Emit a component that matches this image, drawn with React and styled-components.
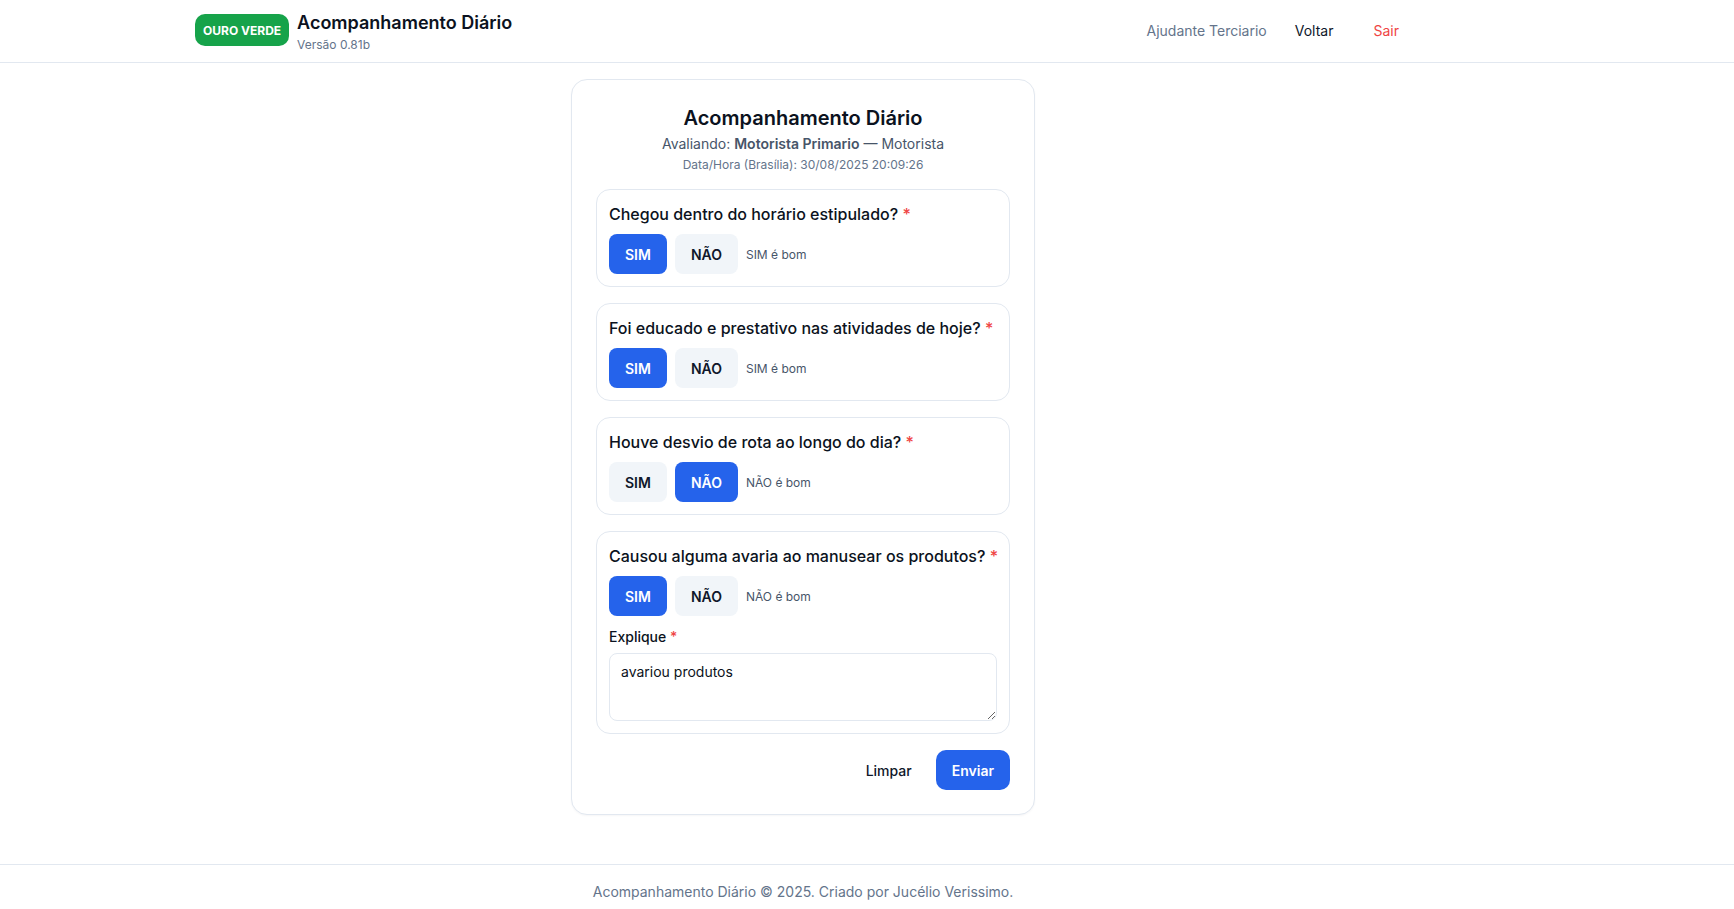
import styled, { createGlobalStyle } from "styled-components";

const questions = [
  { id: 1, text: "Chegou dentro do horário estipulado?", value: "SIM", hint: "SIM é bom" },
  { id: 2, text: "Foi educado e prestativo nas atividades de hoje?", value: "SIM", hint: "SIM é bom" },
  { id: 3, text: "Houve desvio de rota ao longo do dia?", value: "NÃO", hint: "NÃO é bom" },
  { id: 4, text: "Causou alguma avaria ao manusear os produtos?", value: "SIM", hint: "NÃO é bom", explain: "avariou produtos" },
];

export default function App() {
  return (
    <>
      <GlobalStyle />
      <Page>
        <Header>
          <Container>
            <HeaderRow>
              <Brand>
                <Badge>OURO VERDE</Badge>
                <BrandText>
                  <AppTitle>Acompanhamento Diário</AppTitle>
                  <Version>Versão 0.81b</Version>
                </BrandText>
              </Brand>
              <Nav>
                <UserName>Ajudante Terciario</UserName>
                <NavButton>Voltar</NavButton>
                <NavButton $danger>Sair</NavButton>
              </Nav>
            </HeaderRow>
          </Container>
        </Header>

        <Main>
          <Container>
            <Card>
              <CardHead>
                <CardTitle>Acompanhamento Diário</CardTitle>
                <Subtitle>
                  Avaliando: <strong>Motorista Primario</strong> — Motorista
                </Subtitle>
                <Stamp>Data/Hora (Brasília): 30/08/2025 20:09:26</Stamp>
              </CardHead>

              <Questions>
                {questions.map((q) => (
                  <QuestionBox key={q.id}>
                    <QuestionText>
                      {q.text} <Req>*</Req>
                    </QuestionText>
                    <Choices>
                      <Choice $active={q.value === "SIM"}>SIM</Choice>
                      <Choice $active={q.value === "NÃO"}>NÃO</Choice>
                      <Hint>{q.hint}</Hint>
                    </Choices>
                    {q.explain && (
                      <>
                        <FieldLabel>
                          Explique <Req>*</Req>
                        </FieldLabel>
                        <TextArea defaultValue={q.explain} />
                      </>
                    )}
                  </QuestionBox>
                ))}
              </Questions>

              <Actions>
                <GhostButton>Limpar</GhostButton>
                <PrimaryButton>Enviar</PrimaryButton>
              </Actions>
            </Card>
          </Container>
        </Main>

        <Footer>
          <Container>
            <FooterText>Acompanhamento Diário © 2025. Criado por Jucélio Verissimo.</FooterText>
          </Container>
        </Footer>
      </Page>
    </>
  );
}

const GlobalStyle = createGlobalStyle`
  * { box-sizing: border-box; }
  body {
    margin: 0;
    background: #ffffff;
    font-family: Inter, "Noto Sans", "Liberation Sans", sans-serif;
    color: #0f172a;
  }
  button, textarea { font-family: inherit; }
`;

const Page = styled.div`
  min-height: 100vh;
  background: #ffffff;
`;

const Container = styled.div`
  width: 1216px;
  margin-left: 195px;
`;

const Header = styled.header`
  height: 63px;
  border-bottom: 1px solid #e2e8f0;
`;

const HeaderRow = styled.div`
  height: 62px;
  display: flex;
  align-items: center;
  justify-content: space-between;
`;

const Brand = styled.div`
  display: flex;
  align-items: center;
  gap: 8px;
`;

const Badge = styled.span`
  display: inline-flex;
  align-items: center;
  height: 32px;
  padding: 0 8px;
  margin-top: -2px;
  border-radius: 10px;
  background: #16a34a;
  color: #ffffff;
  font-size: 12px;
  font-weight: 700;
`;

const BrandText = styled.div`
  display: flex;
  flex-direction: column;
  gap: 2px;
  margin-top: 2px;
`;

const AppTitle = styled.div`
  font-size: 18px;
  font-weight: 600;
  line-height: 24px;
  color: #0b1220;
`;

const Version = styled.div`
  font-size: 12px;
  line-height: 16px;
  color: #64748b;
`;

const Nav = styled.nav`
  display: flex;
  align-items: center;
  gap: 16px;
  margin-top: -2px;
`;

const UserName = styled.span`
  font-size: 14px;
  color: #64748b;
`;

const NavButton = styled.button`
  border: 0;
  background: transparent;
  padding: 6px 12px;
  font-size: 14px;
  color: ${(p) => (p.$danger ? "#ef4444" : "#0f172a")};
  cursor: pointer;
`;

const Main = styled.main`
  padding: 16px 0 49px;
`;

const Card = styled.section`
  width: 464px;
  margin: 0 auto;
  padding: 24px;
  border: 1px solid #e2e8f0;
  border-radius: 16px;
  background: #ffffff;
  box-shadow: 0 1px 2px rgba(15, 23, 42, 0.04);
`;

const CardHead = styled.div`
  text-align: center;
  margin-bottom: 16px;
`;

const CardTitle = styled.h1`
  margin: 0;
  font-size: 20px;
  line-height: 28px;
  font-weight: 600;
  color: #0b1220;
`;

const Subtitle = styled.p`
  margin: 2px 0 0;
  font-size: 14px;
  line-height: 20px;
  color: #475569;

  strong {
    font-weight: 600;
  }
`;

const Stamp = styled.p`
  margin: 3px 0 0;
  font-size: 12px;
  line-height: 16px;
  color: #64748b;
`;

const Questions = styled.div`
  display: flex;
  flex-direction: column;
  gap: 16px;
`;

const QuestionBox = styled.div`
  border: 1px solid #e2e8f0;
  border-radius: 14px;
  padding: 12px;
`;

const QuestionText = styled.div`
  font-size: 16px;
  line-height: 24px;
  font-weight: 500;
  color: #0b1220;
  margin-bottom: 8px;
  white-space: nowrap;
`;

const Req = styled.span`
  color: #ef4444;
`;

const Choices = styled.div`
  display: flex;
  align-items: center;
  gap: 8px;
`;

const Choice = styled.button`
  height: 40px;
  padding: 0 16px;
  border: 0;
  border-radius: 8px;
  font-size: 14px;
  font-weight: 600;
  background: ${(p) => (p.$active ? "#2563eb" : "#f1f5f9")};
  color: ${(p) => (p.$active ? "#ffffff" : "#0f172a")};
  cursor: pointer;
`;

const Hint = styled.span`
  font-size: 12px;
  color: #475569;
`;

const FieldLabel = styled.div`
  margin-top: 11px;
  font-size: 14px;
  line-height: 20px;
  font-weight: 500;
  color: #0b1220;
`;

const TextArea = styled.textarea`
  display: block;
  width: 100%;
  height: 68px;
  margin-top: 6px;
  padding: 8px 11px;
  border: 1px solid #e2e8f0;
  border-radius: 8px;
  font-size: 14px;
  line-height: 20px;
  color: #0b1220;
  resize: vertical;
  outline: none;
`;

const Actions = styled.div`
  display: flex;
  justify-content: flex-end;
  gap: 8px;
  margin-top: 16px;
`;

const GhostButton = styled.button`
  height: 40px;
  padding: 0 16px;
  border: 0;
  border-radius: 10px;
  background: transparent;
  font-size: 14px;
  font-weight: 500;
  color: #0f172a;
  cursor: pointer;
`;

const PrimaryButton = styled(GhostButton)`
  background: #2563eb;
  color: #ffffff;
  font-weight: 600;
`;

const Footer = styled.footer`
  border-top: 1px solid #e2e8f0;
  padding: 17px 0 16px;
`;

const FooterText = styled.p`
  margin: 0;
  text-align: center;
  font-size: 14px;
  line-height: 20px;
  color: #64748b;
`;
